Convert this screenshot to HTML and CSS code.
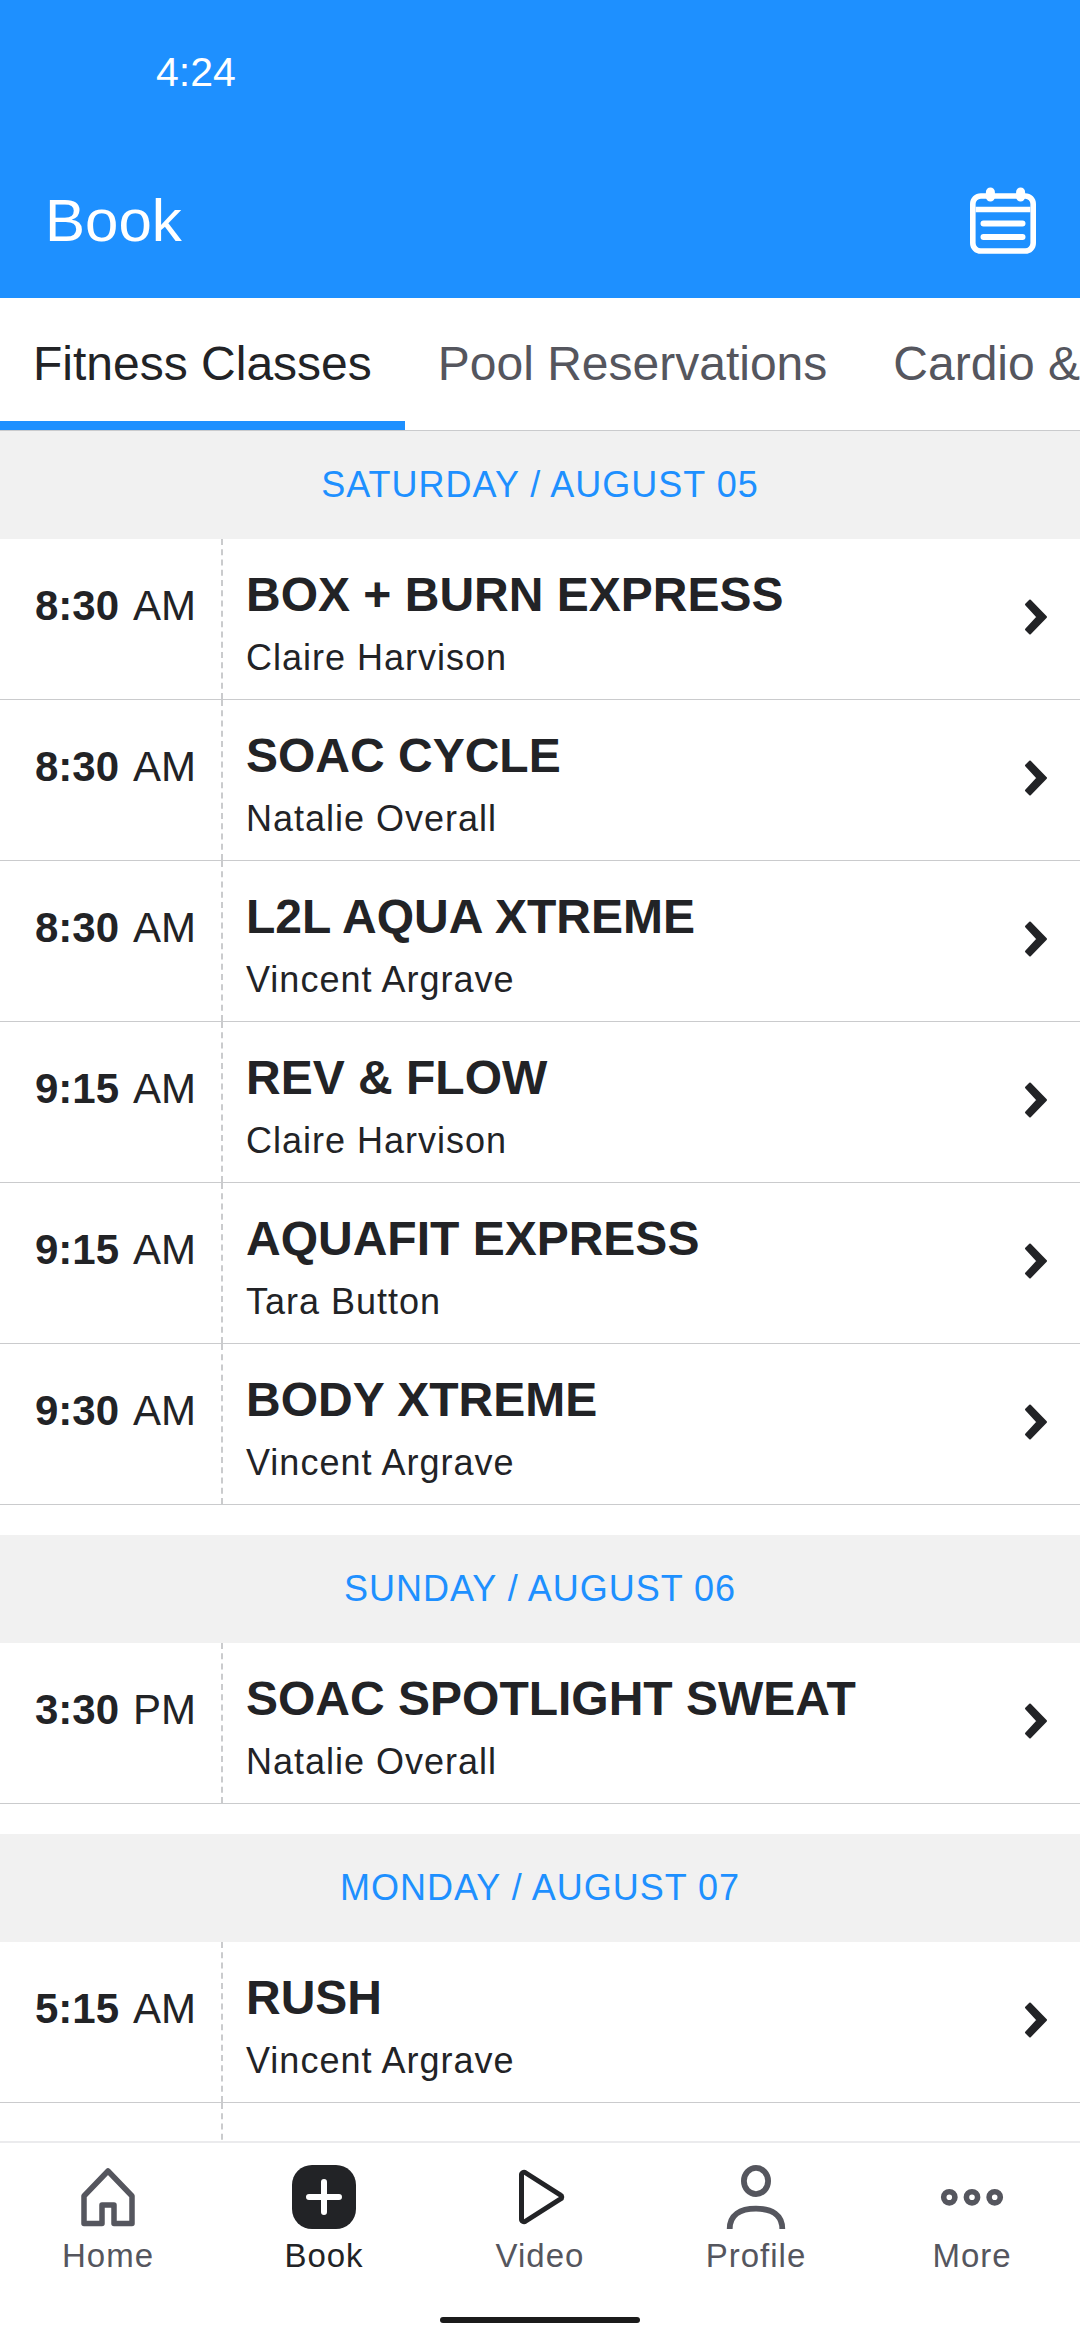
FILE: index.html
```html
<!DOCTYPE html>
<html lang="en">
<head>
<meta charset="utf-8">
<meta name="viewport" content="width=device-width">
<title>Book</title>
<link rel="stylesheet" href="styles.css">
</head>
<body>
<svg class="sprite">
    <symbol id="chevron" viewBox="0 0 24 36">
        <path d="M6 1.5 22 18 6 34.5 2 30.5 13.5 18 2 5.5z" fill="currentColor" stroke="currentColor" stroke-width="2" stroke-linejoin="round"/>
    </symbol>
</svg>
<header>
    <div class="status">4:24</div>
    <div class="title">
        <h1>Book</h1>
        <button aria-label="Calendar">
            <svg viewBox="0 0 66 68" fill="none" stroke="currentColor">
                <rect x="2.8" y="9" width="60.4" height="55" rx="8" stroke-width="5.6"/>
                <path d="M5.6 22.5h54.8" stroke-width="5.4"/>
                <path d="M13.5 36.5h39M13.5 50h39" stroke-width="6" stroke-linecap="round"/>
                <path d="M20.4 5v5M50.6 5v5" stroke-width="9" stroke-linecap="round"/>
            </svg>
        </button>
    </div>
</header>
<nav class="tabs">
    <button class="active">Fitness Classes</button>
    <button>Pool Reservations</button>
    <button>Cardio &amp;</button>
</nav>
<main>
    <section>
        <h2>SATURDAY / AUGUST 05</h2>
        <a class="row" href="#">
            <div class="time"><b>8:30</b> AM</div>
            <div class="class"><h3>BOX + BURN EXPRESS</h3><p>Claire Harvison</p></div>
            <svg class="chevron"><use href="#chevron"/></svg>
        </a>
        <a class="row" href="#">
            <div class="time"><b>8:30</b> AM</div>
            <div class="class"><h3>SOAC CYCLE</h3><p>Natalie Overall</p></div>
            <svg class="chevron"><use href="#chevron"/></svg>
        </a>
        <a class="row" href="#">
            <div class="time"><b>8:30</b> AM</div>
            <div class="class"><h3>L2L AQUA XTREME</h3><p>Vincent Argrave</p></div>
            <svg class="chevron"><use href="#chevron"/></svg>
        </a>
        <a class="row" href="#">
            <div class="time"><b>9:15</b> AM</div>
            <div class="class"><h3>REV &amp; FLOW</h3><p>Claire Harvison</p></div>
            <svg class="chevron"><use href="#chevron"/></svg>
        </a>
        <a class="row" href="#">
            <div class="time"><b>9:15</b> AM</div>
            <div class="class"><h3>AQUAFIT EXPRESS</h3><p>Tara Button</p></div>
            <svg class="chevron"><use href="#chevron"/></svg>
        </a>
        <a class="row" href="#">
            <div class="time"><b>9:30</b> AM</div>
            <div class="class"><h3>BODY XTREME</h3><p>Vincent Argrave</p></div>
            <svg class="chevron"><use href="#chevron"/></svg>
        </a>
    </section>
    <section>
        <h2>SUNDAY / AUGUST 06</h2>
        <a class="row" href="#">
            <div class="time"><b>3:30</b> PM</div>
            <div class="class"><h3>SOAC SPOTLIGHT SWEAT</h3><p>Natalie Overall</p></div>
            <svg class="chevron"><use href="#chevron"/></svg>
        </a>
    </section>
    <section>
        <h2>MONDAY / AUGUST 07</h2>
        <a class="row" href="#">
            <div class="time"><b>5:15</b> AM</div>
            <div class="class"><h3>RUSH</h3><p>Vincent Argrave</p></div>
            <svg class="chevron"><use href="#chevron"/></svg>
        </a>
        <div class="row">
            <div class="time"></div>
        </div>
    </section>
</main>
<footer>
    <nav class="menu">
        <a href="#">
            <svg viewBox="0 0 64 64" fill="none" stroke="currentColor" stroke-width="5.5" stroke-linejoin="round">
                <path d="M8 31 32 6l24 25v27.5H38V40H26v18.5H8z"/>
            </svg>
            Home
        </a>
        <a class="active" href="#">
            <svg viewBox="0 0 64 64">
                <rect width="64" height="64" rx="20" fill="currentColor"/>
                <path d="M17 32h30M32 17v30" stroke="#fff" stroke-width="6" stroke-linecap="round"/>
            </svg>
            Book
        </a>
        <a class="video" href="#">
            <svg viewBox="0 0 64 64" fill="none" stroke="currentColor" stroke-width="5">
                <path d="M13.5 10a2.5 2.5 0 0 1 4-2.2L52.5 30a2.2 2.2 0 0 1 0 4L17.5 56.2a2.5 2.5 0 0 1-4-2.2z"/>
            </svg>
            Video
        </a>
        <a href="#">
            <svg viewBox="0 0 64 64" fill="none" stroke="currentColor" stroke-width="5.8">
                <ellipse cx="32" cy="16" rx="12.1" ry="13.1"/>
                <path d="M5.7 64C5.7 50 16 43.7 32 43.7S58.3 50 58.3 64"/>
            </svg>
            Profile
        </a>
        <a href="#">
            <svg viewBox="0 0 64 64" fill="none" stroke="currentColor" stroke-width="5.6">
                <circle cx="9.3" cy="32.3" r="5.6"/>
                <circle cx="32" cy="32.3" r="5.6"/>
                <circle cx="54.7" cy="32.3" r="5.6"/>
            </svg>
            More
        </a>
    </nav>
    <div class="handle"></div>
</footer>
</body>
</html>
```
FILE: styles.css
```css
* {
    box-sizing: border-box;
}

body {
    font-family: "Liberation Sans", Arial, sans-serif;
    background: #fff;
    color: #222326;
    margin: 0;
    height: 100vh;
    display: flex;
    flex-direction: column;
}

h1, h2, h3, p {
    margin: 0;
}

a {
    color: inherit;
    text-decoration: none;
}

button {
    font-family: inherit;
    background: none;
    color: inherit;
    border: none;
    padding: 0;
    cursor: pointer;
}

svg {
    display: block;
}

.sprite {
    display: none;
}

header {
    background: #1e90ff;
    color: #fff;
}

.status {
    padding-left: 156px;
    font-size: 41px;
    line-height: 144px;
}

.title {
    display: flex;
    justify-content: space-between;
    align-items: center;
    padding: 0 44px 0 45px;
}

h1 {
    font-size: 60px;
    font-weight: normal;
    line-height: 154px;
}

.title svg {
    width: 66px;
    height: 68px;
}

.tabs {
    display: flex;
    flex-shrink: 0;
    overflow: hidden;
    border-bottom: 1px solid #cacbcd;
}

.tabs button {
    flex-shrink: 0;
    padding: 0 33px;
    font-size: 48px;
    line-height: 132px;
    white-space: nowrap;
    color: #55565e;
}

.tabs .active {
    color: #222326;
    box-shadow: inset 0 -9px #1e90ff;
}

main {
    flex: 1;
    min-height: 0;
    overflow-y: auto;
    scrollbar-width: none;
}

section {
    margin-bottom: 30px;
}

h2 {
    background: #f1f1f1;
    color: #1e90ff;
    font-size: 36px;
    font-weight: normal;
    line-height: 108px;
    letter-spacing: 1px;
    text-align: center;
}

.row {
    display: flex;
    min-height: 161px;
    border-bottom: 1px solid #cacbcd;
}

.time {
    display: flex;
    gap: 14px;
    width: 223px;
    padding: 37px 0 0 35px;
    border-right: 2px dashed #cacbcd;
    font-size: 42px;
    line-height: 60px;
}

.class {
    flex: 1;
    padding: 26px 0 13px 23px;
}

h3 {
    font-size: 48px;
    line-height: 60px;
}

p {
    margin-top: 5px;
    font-size: 36px;
    line-height: 56px;
    letter-spacing: 1px;
}

.chevron {
    width: 24px;
    height: 36px;
    margin: 60px 32px 0 0;
}

footer {
    border-top: 2px solid #ebebed;
    background: #fff;
    padding: 22px 0 17px;
}

.menu {
    display: grid;
    grid-template-columns: repeat(5, 1fr);
    margin-bottom: 41px;
}

.menu a {
    display: flex;
    flex-direction: column;
    align-items: center;
    gap: 7px;
    color: #55565e;
    font-size: 33px;
    line-height: 40px;
    letter-spacing: 1px;
}

.menu .active,
.menu .video svg {
    color: #222326;
}

.menu svg {
    width: 64px;
    height: 64px;
}

.handle {
    width: 200px;
    height: 6px;
    margin: 0 auto;
    border-radius: 3px;
    background: #1b1b1b;
}
```
